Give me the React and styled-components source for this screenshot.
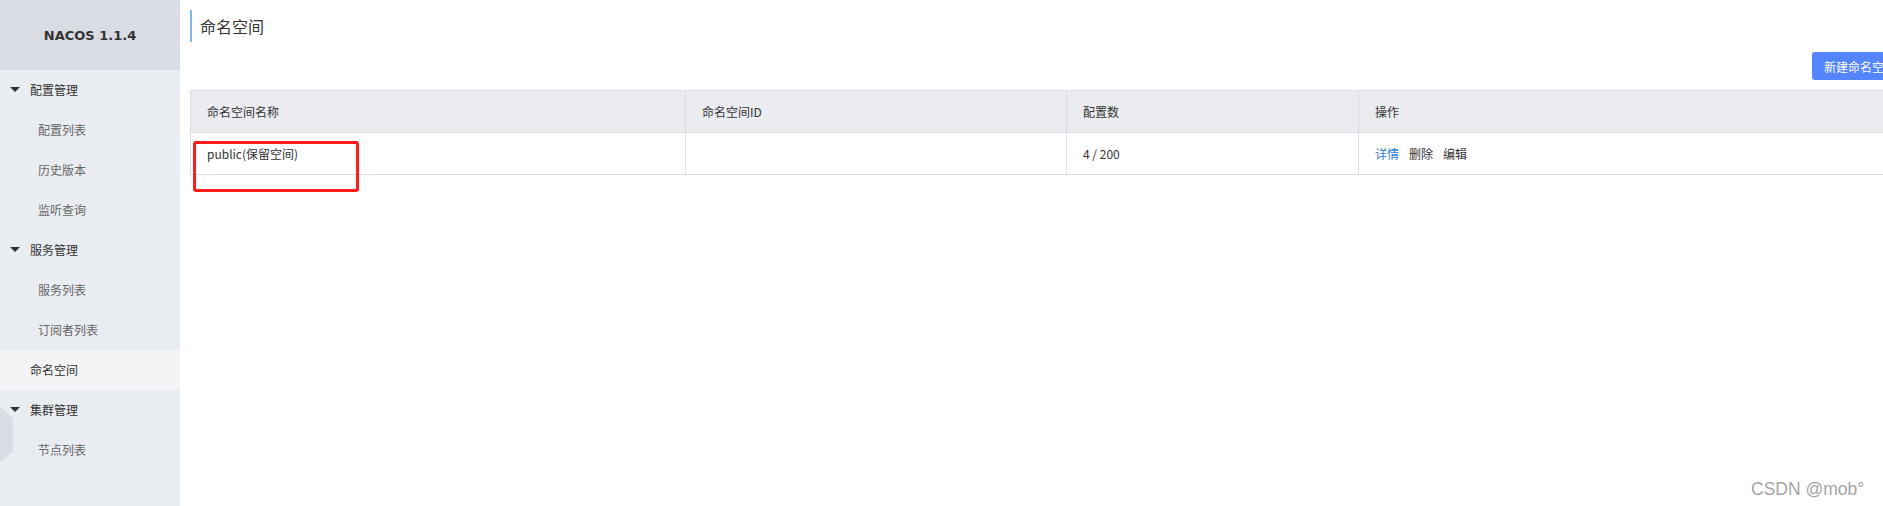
import React from 'react'
import styled, { createGlobalStyle } from 'styled-components'

const GlobalStyle = createGlobalStyle`
  html, body {
    margin: 0;
    padding: 0;
    overflow: hidden;
    background: #fff;
  }
  * {
    box-sizing: border-box;
  }
`

const Page = styled.div`
  position: relative;
  display: flex;
  width: 1928px;
  height: 506px;
  font-family: "Noto Sans CJK SC", "Liberation Sans", sans-serif;
  font-size: 12px;
  color: #333;
`

const Sidebar = styled.aside`
  position: relative;
  width: 180px;
  flex-shrink: 0;
  background: #e9ecf0;
  display: flex;
  flex-direction: column;
`

const Brand = styled.div`
  height: 70px;
  background: #d9dde3;
  display: flex;
  align-items: center;
  justify-content: center;
  font-family: "DejaVu Sans", "Liberation Sans", sans-serif;
  font-weight: bold;
  font-size: 13px;
  color: #333;
`

const MenuItem = styled.div`
  height: 40px;
  display: flex;
  align-items: center;
  padding-left: ${({ level }) => (level === 'sub' ? '38px' : level === 'group' ? '10px' : '30px')};
  padding-bottom: 1px;
  background: ${({ active }) => (active ? '#f3f4f6' : 'transparent')};
  color: ${({ level }) => (level === 'sub' ? '#666' : '#333')};
  font-size: 12px;
`

const Caret = styled.span`
  width: 0;
  height: 0;
  border-left: 5px solid transparent;
  border-right: 5px solid transparent;
  border-top: 5px solid #333;
  margin-right: 10px;
`

const Handle = styled.div`
  position: absolute;
  left: 0;
  top: 407px;
  width: 13px;
  height: 55px;
  background: #d9dde3;
  clip-path: polygon(0 0, 100% 20%, 100% 82%, 0 100%);
`

const Main = styled.main`
  flex: 1;
  padding: 10px 20px 0 10px;
  display: flex;
  flex-direction: column;
`

const Title = styled.h1`
  margin: 0;
  height: 32px;
  line-height: 32px;
  border-left: 2px solid #88b7e5;
  padding-left: 8px;
  font-size: 16px;
  font-weight: normal;
  color: #333;
`

const Toolbar = styled.div`
  display: flex;
  justify-content: flex-end;
  margin-top: 10px;
`

const PrimaryButton = styled.button`
  height: 28px;
  padding: 0 12px;
  border: none;
  border-radius: 3px;
  background: #5584ff;
  color: #fff;
  font-family: inherit;
  font-size: 12px;
  white-space: nowrap;
`

const TableWrap = styled.div`
  position: relative;
  margin-top: 10px;
`

const Table = styled.table`
  width: 100%;
  border-collapse: collapse;
  table-layout: fixed;
`

const Th = styled.th`
  height: 42px;
  padding: 0 16px;
  text-align: left;
  font-weight: normal;
  color: #333;
  background: #ebecf0;
  border: 1px solid #dcdee3;
`

const Td = styled.td`
  height: 42px;
  padding: 0 16px;
  color: #333;
  border: 1px solid #dcdee3;
  border-top: none;
`

const Actions = styled.div`
  display: flex;
  gap: 10px;
`

const Action = styled.span`
  color: ${({ primary }) => (primary ? '#2a78d8' : '#333')};
`

const Highlight = styled.div`
  position: absolute;
  left: 3px;
  top: 51px;
  width: 166px;
  height: 51px;
  border: 3px solid #fc1d1d;
  border-radius: 3px;
  pointer-events: none;
`

const Watermark = styled.div`
  position: absolute;
  left: 1751px;
  top: 479px;
  font-family: "Liberation Sans", sans-serif;
  font-size: 17.5px;
  color: #a4a4a4;
  white-space: nowrap;
`

const menu = [
  { label: '配置管理', level: 'group' },
  { label: '配置列表', level: 'sub' },
  { label: '历史版本', level: 'sub' },
  { label: '监听查询', level: 'sub' },
  { label: '服务管理', level: 'group' },
  { label: '服务列表', level: 'sub' },
  { label: '订阅者列表', level: 'sub' },
  { label: '命名空间', level: 'top', active: true },
  { label: '集群管理', level: 'group' },
  { label: '节点列表', level: 'sub' },
]

const App = () => {
  return (
    <Page>
      <GlobalStyle />
      <Sidebar>
        <Brand>NACOS 1.1.4</Brand>
        {menu.map((m) => (
          <MenuItem key={m.label} level={m.level} active={m.active}>
            {m.level === 'group' && <Caret />}
            {m.label}
          </MenuItem>
        ))}
        <Handle />
      </Sidebar>
      <Main>
        <Title>命名空间</Title>
        <Toolbar>
          <PrimaryButton>新建命名空间</PrimaryButton>
        </Toolbar>
        <TableWrap>
          <Table>
            <colgroup>
              <col style={{ width: 495 }} />
              <col style={{ width: 381 }} />
              <col style={{ width: 292 }} />
              <col />
            </colgroup>
            <thead>
              <tr>
                <Th>命名空间名称</Th>
                <Th>命名空间ID</Th>
                <Th>配置数</Th>
                <Th>操作</Th>
              </tr>
            </thead>
            <tbody>
              <tr>
                <Td>public(保留空间)</Td>
                <Td></Td>
                <Td>4 / 200</Td>
                <Td>
                  <Actions>
                    <Action primary>详情</Action>
                    <Action>删除</Action>
                    <Action>编辑</Action>
                  </Actions>
                </Td>
              </tr>
            </tbody>
          </Table>
          <Highlight />
        </TableWrap>
      </Main>
      <Watermark>CSDN @mob°</Watermark>
    </Page>
  )
}

export default App
